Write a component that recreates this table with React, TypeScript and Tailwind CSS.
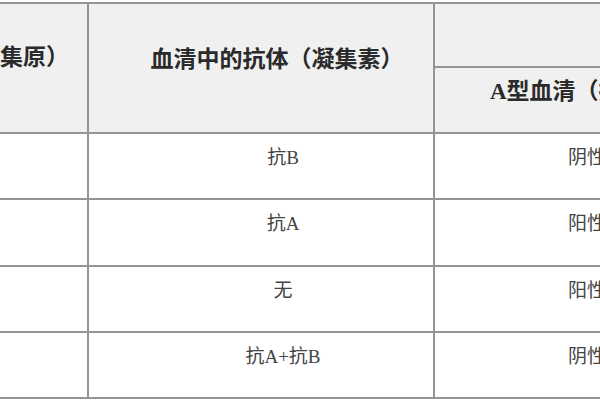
import React from "react";

const fontStack = '"Liberation Serif", "Noto Sans CJK SC", serif';

const rows = [
  { anti: "抗B", a: "阴性" },
  { anti: "抗A", a: "阳性" },
  { anti: "无", a: "阳性" },
  { anti: "抗A+抗B", a: "阴性" },
];

export default function App() {
  return (
    <div className="w-[600px] h-[400px] overflow-hidden bg-white pt-[2px]" style={{ fontFamily: fontStack }}>
      <div className="ml-[-165px] w-[1100px] grid grid-cols-[250px_344px_300px_200px] grid-rows-[62px_64px_64px_65px_64px_64px] gap-[2px] p-[2px] bg-[#949494]">
        {/* header col 1 */}
        <div className="row-span-2 bg-[#f0f0f0] flex items-center justify-end pr-[18px] pb-[20px] text-[23px] font-semibold text-[#2a2a2a] whitespace-nowrap overflow-hidden">
          红细胞上的抗原（凝集原）
        </div>
        {/* header col 2 */}
        <div className="row-span-2 bg-[#f0f0f0] flex items-center justify-center pl-[32px] pb-[16px] text-[23px] font-semibold text-[#2a2a2a] whitespace-nowrap">
          血清中的抗体（凝集素）
        </div>
        {/* header col 3 top (colspan) */}
        <div className="col-span-2 bg-[#f0f0f0]" />
        {/* header second row */}
        <div className="bg-[#f0f0f0] flex items-center pl-[55px] pb-[16px] text-[23px] font-semibold text-[#2a2a2a] whitespace-nowrap">
          A型血清（抗B）
        </div>
        <div className="bg-[#f0f0f0]" />
        {rows.map((r, i) => (
          <React.Fragment key={i}>
            <div className="bg-white" />
            <div className="bg-white flex items-center justify-center pl-[44px] pb-[16px] text-[19px] text-[#444] whitespace-nowrap">
              {r.anti}
            </div>
            <div className="bg-white flex items-center pl-[133px] pb-[16px] text-[19px] text-[#444] whitespace-nowrap">
              {r.a}
            </div>
            <div className="bg-white" />
          </React.Fragment>
        ))}
      </div>
    </div>
  );
}
